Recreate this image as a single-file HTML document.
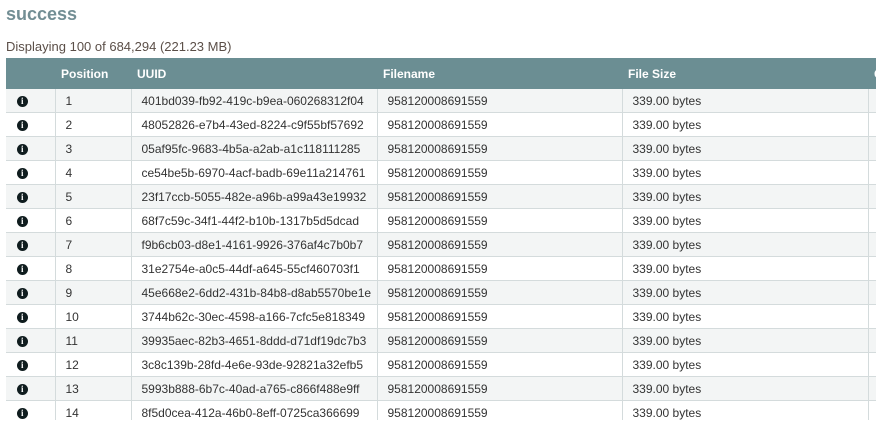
<!DOCTYPE html><html><head><style>
body{margin:0;width:886px;height:436px;overflow:hidden;background:#fff;font-family:"Liberation Sans",sans-serif;}
h1{position:absolute;left:6px;top:4px;margin:0;font-size:18px;font-weight:bold;color:#728e94;}
.disp{position:absolute;left:6px;top:39px;font-size:13px;color:#5b4f48;}
.wrap{position:absolute;left:6px;top:58px;width:870px;height:362px;overflow:hidden;}
table{border-collapse:collapse;table-layout:fixed;width:880px;font-size:12px;color:#333;}
th{background:#6b8e93;color:#fff;font-weight:bold;text-align:left;height:31px;padding:0 0 0 6px;font-size:12px;}
td{height:23px;padding:0 0 0 10px;border-left:1px solid #d4dbdc;border-bottom:1px solid #d4dbdc;white-space:nowrap;overflow:hidden;}
td:first-child{border-left:none;padding:0;text-align:center;}
tr:nth-child(even) td{background:#f3f5f5;}
.i{display:inline-block;width:11px;height:11px;border-radius:50%;background:#0f1c1e;color:#fff;font:bold 9px/11px "Liberation Serif",serif;text-align:center;vertical-align:middle;margin-left:-16px;}
</style></head><body>
<h1>success</h1>
<div class="disp">Displaying 100 of 684,294 (221.23 MB)</div>
<div class="wrap"><table>
<colgroup><col style="width:49px"><col style="width:76px"><col style="width:246px"><col style="width:245px"><col style="width:246px"><col style="width:18px"></colgroup>
<tr><th></th><th>Position</th><th>UUID</th><th>Filename</th><th>File Size</th><th>C</th></tr>
<tr><td><span class="i">i</span></td><td>1</td><td>401bd039-fb92-419c-b9ea-060268312f04</td><td>958120008691559</td><td>339.00 bytes</td><td></td></tr>
<tr><td><span class="i">i</span></td><td>2</td><td>48052826-e7b4-43ed-8224-c9f55bf57692</td><td>958120008691559</td><td>339.00 bytes</td><td></td></tr>
<tr><td><span class="i">i</span></td><td>3</td><td>05af95fc-9683-4b5a-a2ab-a1c118111285</td><td>958120008691559</td><td>339.00 bytes</td><td></td></tr>
<tr><td><span class="i">i</span></td><td>4</td><td>ce54be5b-6970-4acf-badb-69e11a214761</td><td>958120008691559</td><td>339.00 bytes</td><td></td></tr>
<tr><td><span class="i">i</span></td><td>5</td><td>23f17ccb-5055-482e-a96b-a99a43e19932</td><td>958120008691559</td><td>339.00 bytes</td><td></td></tr>
<tr><td><span class="i">i</span></td><td>6</td><td>68f7c59c-34f1-44f2-b10b-1317b5d5dcad</td><td>958120008691559</td><td>339.00 bytes</td><td></td></tr>
<tr><td><span class="i">i</span></td><td>7</td><td>f9b6cb03-d8e1-4161-9926-376af4c7b0b7</td><td>958120008691559</td><td>339.00 bytes</td><td></td></tr>
<tr><td><span class="i">i</span></td><td>8</td><td>31e2754e-a0c5-44df-a645-55cf460703f1</td><td>958120008691559</td><td>339.00 bytes</td><td></td></tr>
<tr><td><span class="i">i</span></td><td>9</td><td>45e668e2-6dd2-431b-84b8-d8ab5570be1e</td><td>958120008691559</td><td>339.00 bytes</td><td></td></tr>
<tr><td><span class="i">i</span></td><td>10</td><td>3744b62c-30ec-4598-a166-7cfc5e818349</td><td>958120008691559</td><td>339.00 bytes</td><td></td></tr>
<tr><td><span class="i">i</span></td><td>11</td><td>39935aec-82b3-4651-8ddd-d71df19dc7b3</td><td>958120008691559</td><td>339.00 bytes</td><td></td></tr>
<tr><td><span class="i">i</span></td><td>12</td><td>3c8c139b-28fd-4e6e-93de-92821a32efb5</td><td>958120008691559</td><td>339.00 bytes</td><td></td></tr>
<tr><td><span class="i">i</span></td><td>13</td><td>5993b888-6b7c-40ad-a765-c866f488e9ff</td><td>958120008691559</td><td>339.00 bytes</td><td></td></tr>
<tr><td><span class="i">i</span></td><td>14</td><td>8f5d0cea-412a-46b0-8eff-0725ca366699</td><td>958120008691559</td><td>339.00 bytes</td><td></td></tr>
</table></div>
</body></html>
